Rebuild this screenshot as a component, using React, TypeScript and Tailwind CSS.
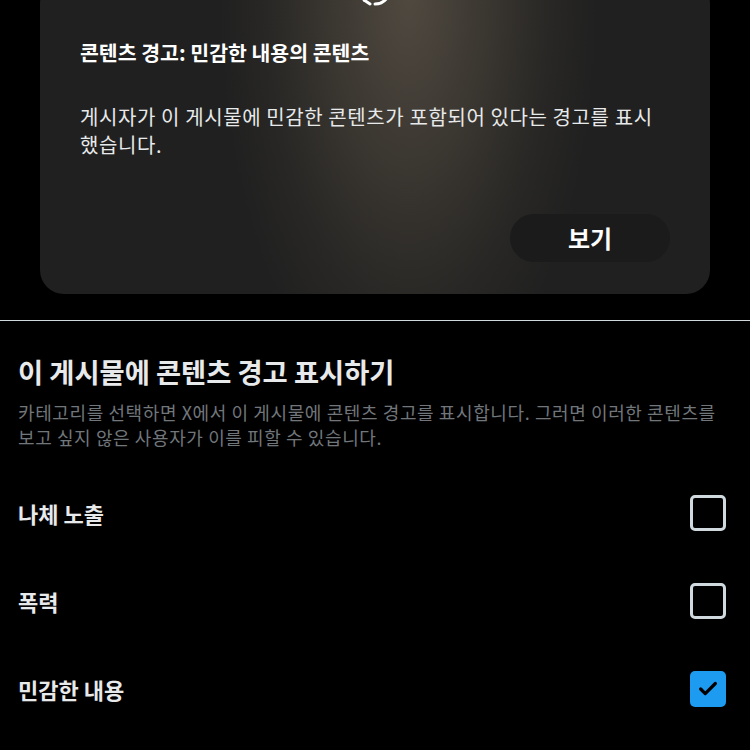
import { Check } from "lucide-react"
import { useState } from "react"

const categories = [
    { id: "nudity", label: "나체 노출", checked: false },
    { id: "violence", label: "폭력", checked: false },
    { id: "sensitive", label: "민감한 내용", checked: true },
]

function WarningCard() {
    return (
        <div className="px-10">
            <div className="-mt-[20px] rounded-[24px] bg-[#202020] bg-[radial-gradient(ellipse_190px_420px_at_55%_5%,#504940_0%,#3b3731_40%,#282725_75%,#202020_100%)] px-10 pb-8">
                <div className="flex h-[58px] items-end justify-center">
                    <svg width="34" height="48" viewBox="0 0 34 48" className="-translate-y-[30px]">
                        <path d="M6 40 L12 44" stroke="#fff" strokeWidth="3" strokeLinecap="round" fill="none" />
                        <path d="M17 44 C22 44 26 42 29 38" stroke="#fff" strokeWidth="3" strokeLinecap="round" fill="none" />
                    </svg>
                </div>
                <h2 className="mt-[1px] text-[20.5px] font-bold leading-[26px] text-white">
                    콘텐츠 경고: 민감한 내용의 콘텐츠
                </h2>
                <p className="mt-[38px] text-[20px] leading-[28px] tracking-[0.6px] text-[#e7e9ea]">
                    게시자가 이 게시물에 민감한 콘텐츠가 포함되어 있다는 경고를 표시했습니다.
                </p>
                <div className="mt-[55px] flex justify-end">
                    <button className="h-[48px] w-[160px] rounded-full bg-[#1b1b1b] text-[24px] font-bold text-white">
                        보기
                    </button>
                </div>
            </div>
        </div>
    )
}

export default function App() {
    const [checked, setChecked] = useState<Record<string, boolean>>(
        Object.fromEntries(categories.map((c) => [c.id, c.checked]))
    )

    return (
        <div className="min-h-[750px] w-[750px] overflow-hidden bg-black font-['Noto_Sans_CJK_KR','Noto_Sans',sans-serif]">
            <WarningCard />
            <div className="mt-[26px] h-px bg-[#cfd9de]" />
            <div className="px-[18px]">
                <h1 className="mt-[32px] text-[27.3px] font-bold leading-[36px] text-[#e7e9ea]">
                    이 게시물에 콘텐츠 경고 표시하기
                </h1>
                <p className="mt-[11px] text-[18px] leading-[25px] tracking-[0.6px] text-[#71767b]">
                    카테고리를 선택하면 X에서 이 게시물에 콘텐츠 경고를 표시합니다. 그러면 이러한 콘텐츠를 보고 싶지 않은 사용자가 이를 피할 수 있습니다.
                </p>
                <div className="mt-[19px]">
                    {categories.map((c) => (
                        <label key={c.id} className="flex h-[88px] items-center justify-between">
                            <span className="text-[22px] font-bold text-[#e7e9ea]">{c.label}</span>
                            <button
                                onClick={() => setChecked((s) => ({ ...s, [c.id]: !s[c.id] }))}
                                className={
                                    checked[c.id]
                                        ? "mr-[6px] flex h-[36px] w-[36px] items-center justify-center rounded-[5px] bg-[#1d9bf0]"
                                        : "mr-[6px] h-[36px] w-[36px] rounded-[5px] border-[3px] border-[#cfd9de]"
                                }
                            >
                                {checked[c.id] && <Check className="h-[22px] w-[22px] text-black" strokeWidth={3.5} />}
                            </button>
                        </label>
                    ))}
                </div>
            </div>
        </div>
    )
}
